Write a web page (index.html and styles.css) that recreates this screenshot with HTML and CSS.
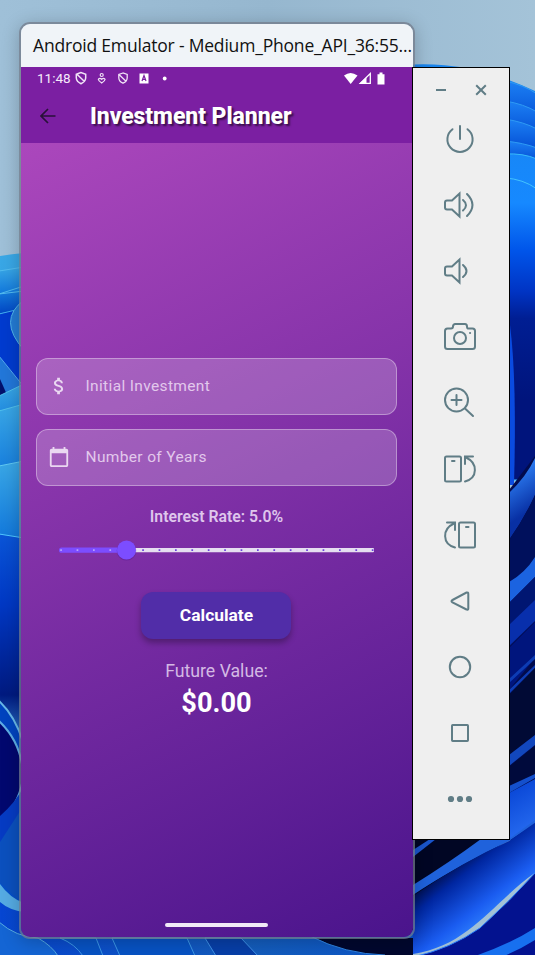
FILE: index.html
```html
<!DOCTYPE html>
<html lang="en">
<head>
<meta charset="utf-8">
<title>Investment Planner</title>
<link rel="stylesheet" href="styles.css">
</head>
<body>
<main class="desktop">
  <svg class="wallpaper" viewBox="0 0 535 955" aria-hidden="true">
    <defs>
      <linearGradient id="sky" x1="0" y1="0" x2="1" y2="0"><stop offset="0" stop-color="#9fc0d8"/><stop offset=".5" stop-color="#96b7cf"/><stop offset="1" stop-color="#a4c3d8"/></linearGradient>
      <linearGradient id="right" x1="0" y1="60" x2="0" y2="400" gradientUnits="userSpaceOnUse"><stop offset="0" stop-color="#1a84ea"/><stop offset=".42" stop-color="#1689ff"/><stop offset=".56" stop-color="#0055ea"/><stop offset=".68" stop-color="#0034c4"/><stop offset=".76" stop-color="#001e93"/><stop offset="1" stop-color="#00147c"/></linearGradient>
      <linearGradient id="petal" x1="0" y1="0" x2="0" y2="1"><stop offset="0" stop-color="#3aa8e6"/><stop offset=".5" stop-color="#167ddd"/><stop offset="1" stop-color="#0145c4"/></linearGradient>
      <linearGradient id="deep" x1="0" y1="0" x2="0" y2="1"><stop offset="0" stop-color="#1c80f4"/><stop offset="1" stop-color="#0046cf"/></linearGradient>
      <linearGradient id="night" x1="0" y1="0" x2="0" y2="1"><stop offset="0" stop-color="#0a55d8"/><stop offset=".35" stop-color="#0038c4"/><stop offset=".8" stop-color="#001a80"/><stop offset="1" stop-color="#2a70c8"/></linearGradient>
      <linearGradient id="blade" x1="509" y1="480" x2="530" y2="510" gradientUnits="userSpaceOnUse"><stop offset="0" stop-color="#2a77ec"/><stop offset="1" stop-color="#0830a4"/></linearGradient>
      <linearGradient id="rib" gradientUnits="userSpaceOnUse" x1="435" y1="868" x2="482" y2="928"><stop offset="0" stop-color="#01052b"/><stop offset=".3" stop-color="#0026a0"/><stop offset=".75" stop-color="#1a5cf0"/><stop offset="1" stop-color="#2e80ff"/></linearGradient>
      <linearGradient id="edge" gradientUnits="userSpaceOnUse" x1="509" y1="793" x2="530" y2="828"><stop offset="0" stop-color="#0b49d8"/><stop offset="1" stop-color="#2468ee"/></linearGradient>
      <linearGradient id="floor" x1="0" y1="0" x2="1" y2="0"><stop offset="0" stop-color="#0646d2"/><stop offset=".6" stop-color="#145dbc"/><stop offset="1" stop-color="#0b55c9"/></linearGradient>
    </defs>
    <path fill="url(#sky)" d="M0 0h535v955H0z"/>
    <path fill="url(#right)" d="M405 65Q470 60 535 91V480H405z"/>
    <g fill="url(#deep)" stroke="#2e9af4" stroke-width="1">
      <path d="M505 81Q524 85 537 94V130H505z"/><path d="M505 101Q524 104 537 112V142H505z"/><path d="M505 119Q524 122 537 129V155H505z"/><path d="M505 141Q524 143 537 148V165H505z"/>
    </g>
    <path fill="url(#right)" stroke="#38bafa" d="M505 154Q523 153 537 159V480H505z"/>
    <path fill="url(#right)" stroke="#43c4ff" d="M505 178Q523 179 537 189V480H505z"/>
    <path fill="#0a4be0" d="M510 325Q517 380 514 485H509z"/>
    <path fill="#020b4d" d="M509 490L535 456V840H509z"/>
    <path fill="url(#blade)" d="M509 493Q526 477 535 458V495Q524 519 509 540z"/>
    <path fill="#00105c" d="M509 540Q524 519 535 495V557Q525 573 509 582z"/>
    <path fill="#1b63e0" d="M509 582Q525 573 535 557V577L509 603z"/>
    <path fill="#001672" d="M509 603L535 577V621L509 647z"/>
    <path fill="#082fac" d="M509 625L535 600V621L509 646z"/>
    <path fill="#00157d" d="M509 648L535 622V658L509 690z"/>
    <path fill="#0d3cb4" d="M509 679L535 655V659L509 683zM509 690L535 665V668L509 694z"/>
    <path fill="#010a35" d="M509 695L535 668V735L509 755z"/>
    <path fill="#1247bd" d="M509 755L535 735V745L509 766z"/>
    <path fill="#000a3c" d="M509 767L535 746V775L509 791z"/>
    <path fill="#1450cd" d="M509 786L535 774V778L509 793z"/>
    <path fill="url(#edge)" d="M509 793L535 779V822L509 840z"/>
    <path fill="#010624" d="M405 835H509V839L413 905V955H405z"/>
    <path fill="#1a55cc" d="M413 850L430 839H436L413 857z"/>
    <path fill="#1f62dc" d="M413 885Q450 862 481 839H509L535 820V824L509 841Q450 870 413 895z"/>
    <path fill="url(#rib)" d="M413 896Q462 862 509 841L536 822V872C493 902 470 945 413 954z"/>
    <path fill="#03128f" stroke="#2478f9" d="M413 957Q450 949 480 928Q510 901 536 872V957z"/>
    <path fill="#1770ef" d="M475 956Q510 944 535 928V940Q519 950 504 956z"/>
    <path fill="url(#petal)" d="M0 256Q12 254 24 253V955H0z"/>
    <path fill="url(#petal)" stroke="#53bbef" d="M-1 271L24 267V291L-1 294zM-1 294L24 286V310L-1 314z"/>
    <path fill="#003bcf" stroke="#40acef" d="M-1 314L24 308V405L-1 390z"/>
    <path fill="#247bd4" stroke="#52b5e9" d="M24 300Q-3 320 24 350z"/>
    <path fill="#2277d9" stroke="#53a7ee" d="M-1 356L24 387V400L-1 405z"/>
    <path fill="#03116d" d="M0 379L8 397L0 399z"/>
    <path fill="url(#petal)" stroke="#52c0eb" d="M-1 396L24 384V470H-1z"/>
    <path fill="url(#petal)" stroke="#52c0eb" d="M-1 411L24 404V540H-1z"/>
    <path fill="url(#petal)" stroke="#60c8f2" d="M-1 466L24 461V600H-1z"/>
    <path fill="url(#night)" stroke="#50c7ff" d="M-1 534L24 538V735H-1z"/>
    <path fill="#0043bf" stroke="#68b8e8" stroke-width="2" d="M-1 701Q15 716 23 742V785L-1 850z"/>
    <path fill="#02086f" stroke="#5eaee5" stroke-width="2" d="M-1 721Q22 743 23 775Q22 800-1 824z"/>
    <path fill="#063bc3" d="M0 816Q16 802 24 786V816L0 844z"/>
    <path fill="#0b50be" d="M0 842L24 805V905L0 883z"/>
    <path fill="url(#floor)" d="M0 885L40 930H413V955H0z"/>
    <path fill="#55abe3" d="M0 884Q10 898 24 903V912Q9 910 0 902z"/>
    <path fill="#1465d4" stroke="#55abe3" d="M-1 922Q16 937 38 938Q52 946 58 956H-1z"/>
    <path fill="#0753c4" stroke="#3d98e6" d="M60 938Q75 944 83 956h20L96 938zM112 938l8 18h75l-8-18z"/>
    <path fill="#073fa8" stroke="#3f91e7" d="M205 938l11 18h42l-17-18z"/>
    <path fill="#01072e" d="M315 938H413V955H380Q345 953 315 938z"/>
    <path fill="none" stroke="#2f83e0" d="M310 936Q345 954 385 955"/>
  </svg>

  <section class="emulator">
    <header class="titlebar">Android Emulator - Medium_Phone_API_36:55...</header>
    <div class="appbar">
      <div class="status">
        <span class="clock">11:48</span>
        <svg class="notices" viewBox="0 0 96 14" aria-hidden="true">
          <g fill="none" stroke="#f0e2f6" stroke-width="1.5">
            <path d="M6 1.5L1.3 3.2V7Q1.6 10.7 6 12.7Q10.4 10.700 10.700 7V3.200zM2.200 3.500L9.500 10.500"/>
            <path d="M48 2L43.800 3.500V7Q44 10.500 48 12.200Q52 10.500 52.200 7V3.500zM44.500 4L51 10.300" stroke-width="1.300"/>
            <circle cx="26.700" cy="4" r="1.500" stroke-width="1.200"/><path stroke-width="1.200" d="M23.300 8.300Q24.800 6.300 26.700 8.300Q28.600 6.300 30.100 8.300Q30 10 26.700 12Q23.400 10 23.300 8.300z"/>
          </g>
          <path fill="#fff" d="M64.500 2.500h9v10h-9z"/><path d="M67 10l2-5.500L71 10M67.800 8.300h2.500" fill="none" stroke="#7b1fa2" stroke-width="1.200"/>
          <circle cx="89.700" cy="7.500" r="1.900" fill="#fff"/>
        </svg>
        <svg class="signals" viewBox="0 0 44 14" aria-hidden="true">
          <path fill="#fff" d="M1 4.500Q7.500-.5 14.500 4.500L7.700 13z"/>
          <path fill="none" stroke="#fff" stroke-width="1.300" d="M17.300 12.300H27.300V2.500z"/><path fill="#fff" d="M16 13L23.500 6V13z"/>
          <path fill="#fff" d="M34.500 3.200h2V1.500h3v1.700h2V13.500h-7z"/>
        </svg>
      </div>
      <div class="heading">
        <svg class="back" viewBox="0 0 16 16" aria-hidden="true"><path d="M8 1L1 8l7 7M1.300 8H15.500" fill="none" stroke="#29113a" stroke-width="1.700"/></svg>
        <h1>Investment Planner</h1>
      </div>
    </div>
    <div class="screen">
      <label class="field">
        <svg viewBox="0 0 24 24" aria-hidden="true"><path fill="currentColor" d="M11.800 10.900c-2.270-.59-3-1.200-3-2.150 0-1.090 1.010-1.850 2.700-1.850 1.780 0 2.440.85 2.500 2.100h2.210c-.07-1.720-1.120-3.300-3.210-3.810V3h-3v2.160c-1.940.42-3.500 1.680-3.500 3.610 0 2.310 1.910 3.460 4.700 4.130 2.500.6 3 1.480 3 2.410 0 .69-.49 1.790-2.700 1.790-2.060 0-2.870-.92-2.980-2.100h-2.200c.12 2.190 1.760 3.420 3.680 3.830V21h3v-2.150c1.950-.37 3.500-1.500 3.500-3.550 0-2.840-2.430-3.810-4.700-4.400z"/></svg>
        <span>Initial Investment</span>
      </label>
      <label class="field">
        <svg viewBox="0 0 24 24" aria-hidden="true"><path fill="currentColor" d="M20 3h-1V1h-2v2H7V1H5v2H4c-1.100 0-2 .9-2 2v16c0 1.100.9 2 2 2h16c1.100 0 2-.9 2-2V5c0-1.100-.9-2-2-2zm0 18H4V8h16v13z"/></svg>
        <span>Number of Years</span>
      </label>
      <p class="rate">Interest Rate: 5.0%</p>
      <svg class="slider" viewBox="0 0 315 22" aria-hidden="true">
        <rect x="60" y="9" width="255" height="4.300" rx="1" fill="#e5def0"/>
        <rect y="8.500" width="70" height="5.300" rx="2.600" fill="#7c4dff"/>
        <path d="M1.200 11.200H66" stroke="#b9a0fb" stroke-width="1.700" stroke-dasharray="1.700 14.700"/>
        <path d="M83.200 11.200H315" stroke="#6840dd" stroke-width="1.700" stroke-dasharray="1.700 14.700"/>
        <circle cx="67.500" cy="11.700" r="9.800" fill="#4b1688" opacity=".35"/>
        <circle cx="67.500" cy="11" r="9.500" fill="#7c4dff"/>
      </svg>
      <button class="calculate">Calculate</button>
      <p class="label">Future Value:</p>
      <p class="value">$0.00</p>
      <div class="homebar"></div>
    </div>
  </section>

  <aside class="toolbar">
    <div class="controls">
      <svg viewBox="0 0 12 12"><path d="M1 6h10"/></svg>
      <svg viewBox="0 0 12 12"><path d="M1.200 1.200l9.600 9.600M10.800 1.200L1.200 10.800"/></svg>
    </div>
    <div class="tools">
      <svg viewBox="0 0 36 36"><path d="M18 5v13M10.500 8.200A12.600 12.600 0 1 0 25.500 8.200"/></svg>
      <svg viewBox="0 0 36 36"><path d="M5 13.500h5L17.500 6.500v23L10 22.500H5Q3 22.500 3 20.500V15.500Q3 13.500 5 13.500zM21 13Q27 18 21 23.500M25 7Q36 18 25 29"/></svg>
      <svg viewBox="0 0 36 36"><path d="M5 13.500h5L17.500 6.500v23L10 22.500H5Q3 22.500 3 20.500V15.500Q3 13.500 5 13.500zM21 12Q28 18 21 24"/></svg>
      <svg viewBox="0 0 36 36"><path d="M5.500 9.500H9Q11 9.500 11 7.500T13 5h10Q25 5 25 7.500T27 9.500h3.500Q33 9.500 33 12v15.500Q33 30 30.500 30H5.500Q3 30 3 27.500V12Q3 9.500 5.500 9.500z"/><circle cx="18" cy="19" r="6"/><path d="M28 14h.1"/></svg>
      <svg viewBox="0 0 36 36"><circle cx="14.500" cy="15" r="11.500"/><path d="M14.500 10v10M9.500 15h10M23 23.500l8 7.500"/></svg>
      <svg viewBox="0 0 36 36"><rect x="3" y="5.500" width="16" height="25" rx="1.500"/><path d="M10 10h2.500M31 5.500h-8V13M24 6.500C36 12 36 27 23 30.500"/></svg>
      <svg viewBox="0 0 36 36"><rect x="17" y="5.500" width="16" height="25" rx="1.500"/><path d="M24 10h2.500M5 5.500h8V13M12 6.500C0 12 0 27 13 30.500"/></svg>
      <svg viewBox="0 0 36 36"><path d="M10.500 17L24.500 9.500Q26.300 9 26.300 11V25.500Q26.300 27.500 24.500 26.500L10.500 19.500Q8.500 18 10.500 17z"/></svg>
      <svg viewBox="0 0 36 36"><circle cx="18" cy="18" r="10.200"/></svg>
      <svg viewBox="0 0 36 36"><rect x="10" y="10" width="16" height="16" rx=".7"/></svg>
      <svg viewBox="0 0 36 36"><g class="dots"><circle cx="9" cy="18" r="3.100"/><circle cx="18" cy="18" r="3.100"/><circle cx="27" cy="18" r="3.100"/></g></svg>
    </div>
  </aside>
</main>
</body>
</html>
```
FILE: styles.css
```css
* { box-sizing: border-box; }
body { margin: 0; font-family: Roboto, "Liberation Sans", sans-serif; }
h1, p { margin: 0; }
svg { display: block; }

.desktop { position: relative; width: 535px; height: 955px; overflow: hidden; }
.wallpaper { width: 535px; height: 955px; }

.emulator {
  position: absolute;
  left: 19px;
  top: 22px;
  width: 396px;
  height: 917px;
  display: flex;
  flex-direction: column;
  border: 2px solid rgba(112, 120, 135, .75);
  border-radius: 11px;
  overflow: hidden;
  box-shadow: 0 3px 18px rgba(0, 0, 0, .22);
}
.titlebar {
  flex: 0 0 43px;
  padding-left: 12px;
  background: #f0f4f8;
  color: #111;
  font: 17.5px/42px "Open Sans", "Noto Sans", sans-serif;
  letter-spacing: -.19px;
  white-space: nowrap;
}
.appbar { flex: 0 0 76px; background: #7b1fa2; }
.status { display: flex; height: 22px; padding: 4px 0 0 16px; }
.clock { width: 38px; color: #f5eafa; font-size: 13.5px; line-height: 15px; }
.notices { width: 96px; height: 14px; }
.signals { width: 44px; height: 14px; margin-left: 172px; }
.heading { display: flex; align-items: center; height: 54px; padding: 0 0 0 19px; }
.back { width: 16px; height: 16px; margin-right: 34px; }
h1 { padding-top: 1px; color: #fff; font-size: 23px; line-height: 28px; font-weight: 800; letter-spacing: -.07px; text-shadow: 2px 2px 2px rgba(0, 0, 0, .55); white-space: nowrap; }

.screen {
  flex: 1;
  display: flex;
  flex-direction: column;
  align-items: center;
  padding: 215px 2px 0 0;
  background: linear-gradient(153.800deg, #ab47bc, #4a148c);
}
.field {
  display: flex;
  align-items: center;
  gap: 16px;
  width: 361px;
  height: 57px;
  margin-bottom: 14px;
  padding: 0 0 1px 11px;
  border: 1px solid rgba(255, 255, 255, .35);
  border-radius: 12px;
  background: rgba(255, 255, 255, .2);
  color: #e2c8ec;
  font-size: 15.5px;
  letter-spacing: .35px;
}
.field svg { width: 22px; height: 22px; color: #ead8f1; }
.rate { margin-top: 7px; padding-left: 1px; color: #dfc6ec; font-size: 15.8px; line-height: 20px; font-weight: 600; }
.slider { width: 315px; height: 22px; margin-top: 12px; }
.calculate {
  width: 150px;
  height: 47px;
  margin-top: 31px;
  padding: 0 0 2px 1px;
  border: 0;
  border-radius: 12px;
  background: #512da8;
  color: #fff;
  font: 700 17.4px/24px Roboto, sans-serif;
  box-shadow: 0 4px 6px rgba(0, 0, 0, .3);
}
.label { margin-top: 20px; padding-left: 1px; color: #d4b9e4; font-size: 17.7px; line-height: 24px; }
.value { margin-top: 3px; padding-left: 1px; color: #fff; font-size: 27.2px; line-height: 34px; font-weight: 700; }
.homebar { width: 103px; height: 4px; margin: auto 0 10px; border-radius: 2px; background: #f1eaf7; }

.toolbar {
  position: absolute;
  left: 412px;
  top: 67px;
  width: 98px;
  height: 773px;
  border: 1px solid #000;
  background: #efefef;
}
.controls { display: flex; gap: 28px; height: 37px; padding: 16px 0 0 22px; }
.toolbar svg { fill: none; stroke: #607d86; stroke-width: 2; }
.controls svg { width: 12px; height: 12px; }
.tools { display: flex; flex-direction: column; gap: 30px; padding: 15.500px 0 0 29px; }
.tools svg { width: 36px; height: 36px; stroke-linecap: round; }
.toolbar .dots { fill: #607d86; stroke: none; }
```
